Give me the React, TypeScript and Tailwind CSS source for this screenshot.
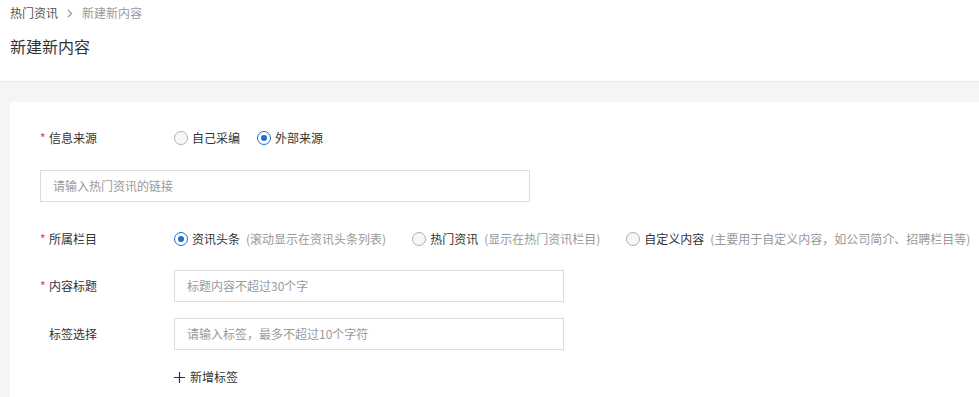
import React from "react";

const font = { fontFamily: '"Noto Sans CJK SC", "Noto Sans", sans-serif' };

function Radio({ checked }: { checked?: boolean }) {
  return (
    <span
      className={
        "inline-flex h-[14px] w-[14px] shrink-0 items-center justify-center rounded-full border " +
        (checked ? "border-[#1b6fcf] bg-white" : "border-[#b0b0b0] bg-[#f7f7f7]")
      }
    >
      {checked && <span className="h-[6px] w-[6px] rounded-full bg-[#1b6fcf]" />}
    </span>
  );
}

function Label({ req, children }: { req?: boolean; children: React.ReactNode }) {
  return (
    <div className="flex w-[134px] shrink-0 items-center text-[12px] text-[#333]">
      <span className={"w-[9px] text-[#e4393c] " + (req ? "" : "invisible")}>*</span>
      <span>{children}</span>
    </div>
  );
}

export default function App() {
  return (
    <div className="min-h-[397px] bg-[#f5f5f5] leading-[16px]" style={font}>
      <div className="h-[82px] border-b border-[#e8e8e8] bg-white px-[10px] pt-[5px]">
        <div className="flex items-center text-[12px] leading-[16px]">
          <span className="text-[#555]">热门资讯</span>
          <span className="mx-[9px] text-[#999]">
            <svg width="6" height="9" viewBox="0 0 6 9" fill="none">
              <path d="M1 1l3.5 3.5L1 8" stroke="#999" strokeWidth="1.2" />
            </svg>
          </span>
          <span className="text-[#999]">新建新内容</span>
        </div>
        <div className="mt-[15px] text-[16px] leading-[20px] text-[#333]">新建新内容</div>
      </div>
      <div className="pl-[10px] pt-[20px]">
        <div className="h-[300px] bg-white pl-[30px] pt-[24px] text-[12px] text-[#333]">
          <div className="flex h-[24px] items-center">
            <Label req>信息来源</Label>
            <div className="flex items-center">
              <Radio />
              <span className="ml-[4px]">自己采编</span>
              <span className="ml-[17px]" />
              <Radio checked />
              <span className="ml-[4px]">外部来源</span>
            </div>
          </div>
          <div className="mt-[20px] flex h-[32px] w-[490px] items-center border border-[#dcdcdc] px-[12px] text-[#999]">
            请输入热门资讯的链接
          </div>
          <div className="mt-[25px] flex h-[24px] items-center">
            <Label req>所属栏目</Label>
            <div className="flex items-center whitespace-nowrap">
              <Radio checked />
              <span className="ml-[4px]">资讯头条</span>
              <span className="ml-[6px] text-[#999]">(滚动显示在资讯头条列表)</span>
              <span className="ml-[26px]" />
              <Radio />
              <span className="ml-[4px]">热门资讯</span>
              <span className="ml-[6px] text-[#999]">(显示在热门资讯栏目)</span>
              <span className="ml-[26px]" />
              <Radio />
              <span className="ml-[4px]">自定义内容</span>
              <span className="ml-[6px] text-[#999]">(主要用于自定义内容，如公司简介、招聘栏目等)</span>
            </div>
          </div>
          <div className="mt-[19px] flex items-center">
            <Label req>内容标题</Label>
            <div className="flex h-[32px] w-[390px] items-center border border-[#dcdcdc] px-[12px] text-[#999]">
              标题内容不超过30个字
            </div>
          </div>
          <div className="mt-[16px] flex items-center">
            <Label>标签选择</Label>
            <div className="flex h-[32px] w-[390px] items-center border border-[#dcdcdc] px-[12px] text-[#999]">
              请输入标签，最多不超过10个字符
            </div>
          </div>
          <div className="mt-[15px] flex h-[24px] items-center">
            <div className="w-[134px]" />
            <div className="flex items-center text-[#333]">
              <svg width="11" height="11" viewBox="0 0 11 11">
                <path d="M5.5 0v11M0 5.5h11" stroke="#333" strokeWidth="1.2" />
              </svg>
              <span className="ml-[5px]">新增标签</span>
            </div>
          </div>
        </div>
      </div>
    </div>
  );
}
